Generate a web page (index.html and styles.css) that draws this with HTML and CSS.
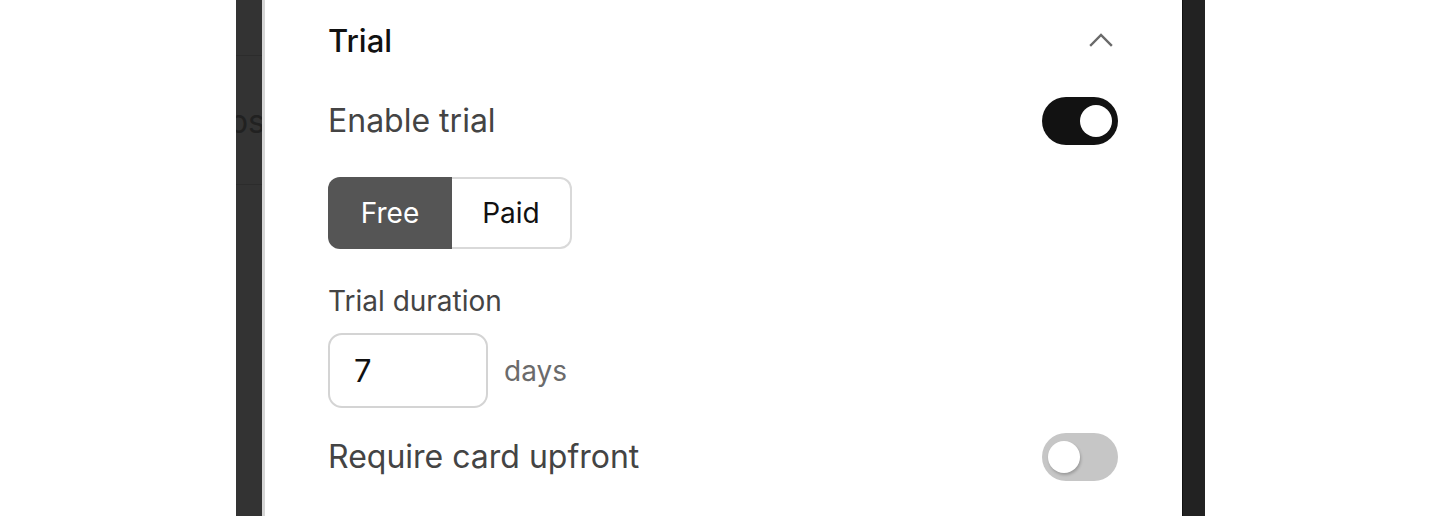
FILE: index.html
```html
<!DOCTYPE html>
<html lang="en">
<head>
<meta charset="utf-8">
<title>Trial settings</title>
<link rel="stylesheet" href="styles.css">
</head>
<body>
<div class="stage">
  <div class="backdrop">
    <div class="under-row under-top"></div>
    <div class="under-row under-mid"><span class="under-text">Subs</span></div>
    <div class="under-row"></div>
  </div>
  <section class="panel">
    <div class="section-head">
      <h2 class="section-title">Trial</h2>
      <svg class="chevron" width="24" height="14" viewBox="0 0 24 14" aria-hidden="true">
        <path d="M2 12 L12 2 L22 12" fill="none" stroke="#6a6a6a" stroke-width="2.4" stroke-linecap="square"/>
      </svg>
    </div>
    <div class="setting-row row-enable">
      <span class="setting-label">Enable trial</span>
      <span class="toggle toggle-on"><span class="knob"></span></span>
    </div>
    <div class="segmented">
      <span class="seg seg-active">Free</span>
      <span class="seg seg-idle">Paid</span>
    </div>
    <div class="field-label">Trial duration</div>
    <div class="duration">
      <div class="num-input">7</div>
      <span class="unit">days</span>
    </div>
    <div class="setting-row row-card">
      <span class="setting-label">Require card upfront</span>
      <span class="toggle toggle-off"><span class="knob"></span></span>
    </div>
  </section>
  <div class="backdrop-right"></div>
</div>
</body>
</html>
```
FILE: styles.css
```css
html, body {
  margin: 0;
  padding: 0;
  background: #ffffff;
  height: 516px;
  overflow: hidden;
}

body {
  font-family: Inter, "Noto Sans", "Liberation Sans", sans-serif;
}

.stage {
  display: flex;
  margin-left: 236px;
  width: 969px;
  height: 516px;
}

.backdrop {
  width: 26px;
  flex: none;
  background: #333333;
  display: flex;
  flex-direction: column;
  overflow: hidden;
}

.under-row {
  flex: none;
}

.under-top {
  height: 55px;
  border-bottom: 1px solid #2c2c2c;
}

.under-mid {
  height: 128px;
  border-bottom: 1px solid #2c2c2c;
  display: flex;
  align-items: center;
  justify-content: flex-end;
  white-space: nowrap;
}

.under-text {
  font-size: 32px;
  color: #212121;
  margin-right: -3px;
  margin-top: 2px;
}

.panel {
  width: 790px;
  flex: none;
  background: #ffffff;
  border-left: 3px solid #d6d6d6;
  padding: 23px 64px 0 63px;
}

.section-head {
  display: flex;
  align-items: center;
  justify-content: space-between;
  height: 36px;
}

.section-title {
  margin: 0;
  font-size: 31px;
  font-weight: 500;
  color: #111111;
  line-height: 36px;
}

.chevron {
  margin-right: 5px;
  margin-top: -2px;
}

.setting-row {
  display: flex;
  align-items: center;
  justify-content: space-between;
  height: 48px;
}

.row-enable {
  margin-top: 38px;
}

.row-card {
  margin-top: 25px;
}

.setting-label {
  font-size: 32px;
  color: #444444;
  line-height: 38px;
}

.toggle {
  width: 76px;
  height: 48px;
  border-radius: 24px;
  box-sizing: border-box;
  display: flex;
  align-items: center;
  padding: 0 6px;
}

.toggle-on {
  background: #121212;
  justify-content: flex-end;
}

.toggle-off {
  background: #c6c6c6;
  justify-content: flex-start;
}

.knob {
  width: 32px;
  height: 32px;
  border-radius: 50%;
  background: #ffffff;
}

.toggle-off .knob {
  box-shadow: 1px 2px 3px rgba(0, 0, 0, 0.22);
}

.segmented {
  margin-top: 32px;
  display: flex;
  width: 244px;
  height: 72px;
}

.seg {
  display: flex;
  align-items: center;
  justify-content: center;
  font-size: 28px;
  box-sizing: border-box;
}

.seg-active {
  width: 124px;
  background: #555555;
  color: #ffffff;
  border-radius: 12px 0 0 12px;
}

.seg-idle {
  width: 120px;
  background: #ffffff;
  color: #111111;
  border: 2px solid #d9d9d9;
  border-left: none;
  border-radius: 0 12px 12px 0;
}

.field-label {
  margin-top: 36px;
  font-size: 28px;
  line-height: 32px;
  color: #444444;
}

.duration {
  margin-top: 16px;
  display: flex;
  align-items: center;
  gap: 16px;
}

.num-input {
  width: 160px;
  height: 75px;
  box-sizing: border-box;
  border: 2px solid #d4d4d4;
  border-radius: 14px;
  padding-left: 24px;
  display: flex;
  align-items: center;
  font-size: 31px;
  color: #111111;
}

.unit {
  font-size: 28px;
  color: #6b6b6b;
}

.backdrop-right {
  width: 22px;
  flex: none;
  background: #222222;
  border-left: 1px solid #111111;
}
```
